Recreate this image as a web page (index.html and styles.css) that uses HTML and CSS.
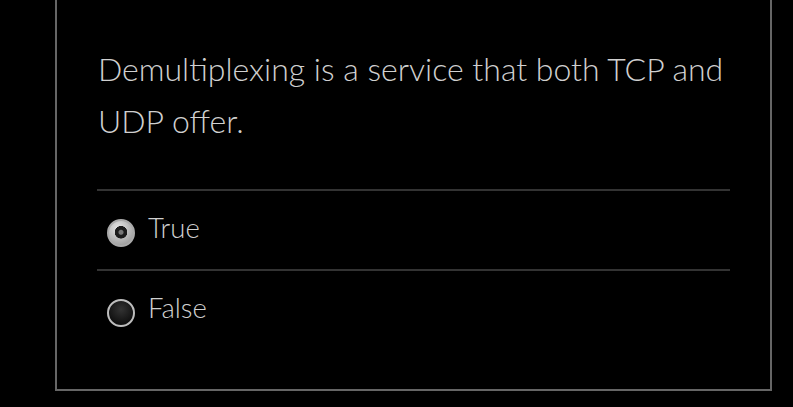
FILE: index.html
```html
<!DOCTYPE html>
<html lang="en">
<head>
<meta charset="utf-8">
<title>Quiz question</title>
<link rel="stylesheet" href="styles.css">
</head>
<body>
<div class="card">
  <p class="question">Demultiplexing is a service that both TCP and UDP offer.</p>
  <ul class="options">
    <li class="option">
      <span class="radio checked"></span>
      <span class="label">True</span>
    </li>
    <li class="option">
      <span class="radio"></span>
      <span class="label">False</span>
    </li>
  </ul>
</div>
</body>
</html>
```
FILE: styles.css
```css
html, body {
  margin: 0;
  padding: 0;
  background: #000;
}
body {
  font-family: Lato, "Open Sans", sans-serif;
  font-weight: 300;
  color: #d0d0d0;
}
.card {
  margin: -2px 0 0 55px;
  width: 632px;
  height: 346px;
  padding: 45px 40px 0 41px;
  border: 2px solid #666;
  border-top: none;
}
.question {
  margin: 0;
  font-size: 32px;
  line-height: 52px;
}
.options {
  list-style: none;
  margin: 42px 0 0 -1px;
  padding: 0;
}
.option {
  display: flex;
  align-items: center;
  gap: 13px;
  height: 74px;
  border-top: 2px solid #333;
  padding-left: 10px;
  padding-top: 4px;
}
.label {
  font-size: 27.5px;
  line-height: 30px;
  margin-bottom: 8px;
}
.radio {
  width: 24px;
  height: 24px;
  margin-top: 1px;
  border-radius: 50%;
  border: 2px solid #bdbdbd;
  background: radial-gradient(circle at 50% 35%, #333 0%, #111 70%);
  box-sizing: content-box;
  flex: none;
}
.radio.checked {
  border-color: #aaa;
  background:
    radial-gradient(circle at 50% 47%, #777 0 2px, #1c1c1c 3px 6px, transparent 6.5px),
    radial-gradient(circle at 40% 30%, #e6e6e6 0%, #a8a8a8 70%, #8a8a8a 100%);
}
```
